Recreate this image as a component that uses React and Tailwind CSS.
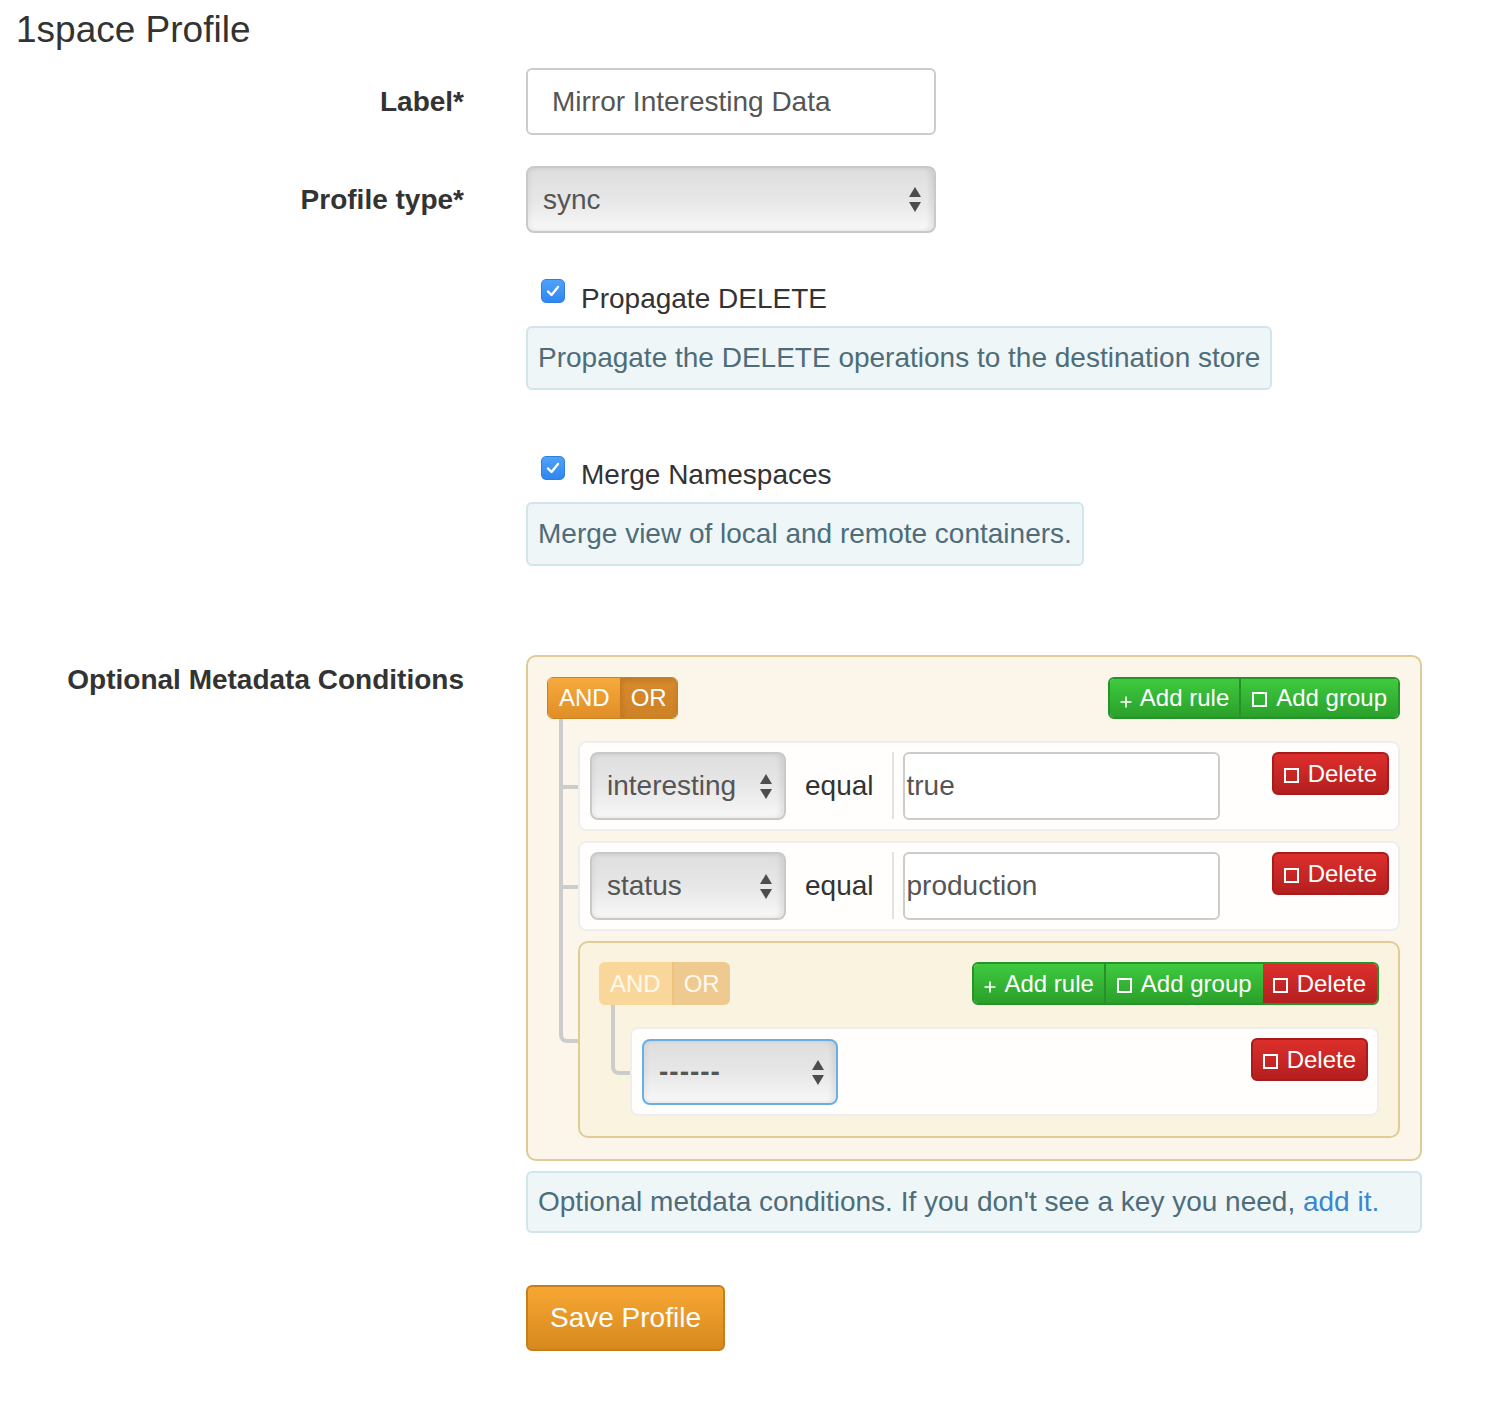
import React from "react";

function Arrows({ className = "" }) {
  return (
    <svg width="12" height="25" viewBox="0 0 12 25" className={className}>
      <path d="M0 10 L6 0 L12 10 Z" fill="#4d4d4d" />
      <path d="M0 15 L12 15 L6 25 Z" fill="#4d4d4d" />
    </svg>
  );
}

function Select({ label, className = "", focused = false, textClass = "" }) {
  return (
    <div
      className={
        "flex items-center justify-between rounded-[8px] border-2 bg-linear-to-b from-[#dedede] via-[#e7e7e7] to-[#f8f8f8] shadow-[inset_-4px_0_5px_rgba(0,0,0,0.07),inset_3px_0_4px_rgba(0,0,0,0.04)] text-[28px] text-[#555555] " +
        (focused ? "border-[#68afea] " : "border-[#c9c9c9] ") +
        className
      }
    >
      <span className={textClass}>{label}</span>
      <Arrows />
    </div>
  );
}

function Sq() {
  return <span className="inline-block w-[15px] h-[15px] border-2 border-white mr-[9px] mt-[3px]" />;
}

function Plus() {
  return (
    <svg width="12" height="12" viewBox="0 0 12 12" className="mr-[8px] mt-[7px]">
      <path d="M6 0.5v11M0.5 6h11" stroke="white" strokeWidth="1.7" />
    </svg>
  );
}

function DeleteBtn({ className = "" }) {
  return (
    <div
      className={
        "flex items-center h-[43px] px-[10px] rounded-[6px] border-2 border-[#a81c1c] bg-linear-to-b from-[#dc2f2c] to-[#b41f1f] text-white text-[24px] leading-none " +
        className
      }
    >
      <Sq />
      <span>Delete</span>
    </div>
  );
}

function AndOr({ faded = false }) {
  if (faded) {
    return (
      <div className="flex h-[43px] rounded-[6px] overflow-hidden text-[24px] text-[#fff8ec] leading-none">
        <div className="flex items-center px-[11px] bg-[#f9d79b]">AND</div>
        <div className="w-[2px] bg-[#f1c27a]" />
        <div className="flex items-center px-[10px] bg-[#efca90]">OR</div>
      </div>
    );
  }
  return (
    <div className="flex h-[42px] rounded-[6px] overflow-hidden border border-[#c98220] text-[24px] text-white leading-none">
      <div className="flex items-center pl-[11px] pr-[10px] bg-linear-to-b from-[#f6aa3c] to-[#e08e27]">AND</div>
      <div className="w-[2px] bg-[#c77d1f]" />
      <div className="flex items-center pl-[9px] pr-[10px] bg-linear-to-b from-[#d98b2d] to-[#cd8226] shadow-[inset_0_3px_5px_rgba(0,0,0,0.12)]">OR</div>
    </div>
  );
}

function GreenGroup({ withDelete = false }) {
  return (
    <div
      className={
        "flex rounded-[6px] overflow-hidden border-2 border-[#25922a] text-[24px] text-white leading-none " +
        (withDelete ? "h-[43px]" : "h-[42px]")
      }
    >
      <div className="flex items-center pl-[10px] pr-[10px] bg-linear-to-b from-[#3fca3f] to-[#2aa02a]">
        <Plus />
        <span>Add rule</span>
      </div>
      <div className="w-[2px] bg-[#27902a]" />
      <div className="flex items-center pl-[11px] pr-[11px] bg-linear-to-b from-[#3fca3f] to-[#2aa02a]">
        <Sq />
        <span>Add group</span>
      </div>
      {withDelete && (
        <div className="flex items-center pl-[10px] pr-[11px] bg-linear-to-b from-[#dc2f2c] to-[#b41f1f]">
          <Sq />
          <span>Delete</span>
        </div>
      )}
    </div>
  );
}

function Conn({ last = false }) {
  return (
    <>
      <span
        className={
          "absolute left-[-21px] top-[-24px] h-[calc(50%+27px)] w-[19px] border-l-4 border-b-4 border-[#cccccc] " +
          (last ? "rounded-bl-[8px]" : "")
        }
      />
      {!last && <span className="absolute left-[-21px] top-[50%] h-[calc(50%+14px)] w-[4px] bg-[#cccccc]" />}
    </>
  );
}

function Rule({ field, value }) {
  return (
    <li className="relative flex items-start rounded-[8px] border-2 border-[#eeeeee] bg-[#fffefc] pt-[9px] pb-[9px] pl-[10px] pr-[9px]">
      <Conn />
      <Select label={field} className="w-[196px] h-[68px] pl-[15px] pr-[12px]" />
      <span className="ml-[19px] self-center text-[28px] text-[#333333] leading-[40px]">equal</span>
      <span className="ml-[18px] w-[2px] h-[67px] bg-[#e2e2e2]" />
      <div className="ml-[9px] w-[317px] h-[68px] flex items-center rounded-[6px] border-2 border-[#cccccc] bg-white pl-[2px] text-[28px] text-[#555555]">
        {value}
      </div>
      <DeleteBtn className="ml-auto" />
    </li>
  );
}

function HelpBox({ children, className = "" }) {
  return (
    <div
      className={
        "rounded-[6px] border-2 border-[#d0e5ec] bg-[#eef6f8] px-[10px] text-[28px] leading-[40px] text-[#4f6c79] " +
        className
      }
    >
      {children}
    </div>
  );
}

function Check() {
  return (
    <span className="mt-[2px] ml-[15px] flex items-center justify-center w-[24px] h-[24px] rounded-[5px] border border-[#2f7fe0] bg-linear-to-b from-[#4ea2f9] to-[#2f86ef] shrink-0">
      <svg width="14" height="12" viewBox="0 0 14 12">
        <path d="M2 6.5 L5.5 10 L12 2" fill="none" stroke="white" strokeWidth="2.4" strokeLinecap="round" strokeLinejoin="round" />
      </svg>
    </span>
  );
}

export default function App() {
  return (
    <div className="font-['Liberation_Sans',Arial,sans-serif] text-[#333333] bg-white min-h-[1418px]">
      <h1 className="ml-[16px] pt-[10px] text-[37px] leading-[40px] font-normal">1space Profile</h1>

      <div className="mt-[18px] flex items-center">
        <label className="w-[464px] text-right font-bold text-[28px] leading-[40px]">Label*</label>
        <div className="ml-[62px] w-[410px] h-[67px] flex items-center rounded-[6px] border-2 border-[#cccccc] bg-white pl-[24px] text-[28px] text-[#555555]">
          Mirror Interesting Data
        </div>
      </div>

      <div className="mt-[31px] flex items-center">
        <label className="w-[464px] text-right font-bold text-[28px] leading-[40px]">Profile type*</label>
        <div className="ml-[62px]">
          <Select label="sync" className="w-[410px] h-[67px] pl-[15px] pr-[13px]" />
        </div>
      </div>

      <div className="mt-[44px] flex">
        <div className="w-[464px]" />
        <div className="ml-[62px] flex flex-col items-start">
          <div className="flex items-start">
            <Check />
            <span className="ml-[16px] mt-[2px] text-[28px] leading-[40px] text-[#333333]">Propagate DELETE</span>
          </div>
          <HelpBox className="mt-[7px] py-[10px] w-fit">
            Propagate the DELETE operations to the destination store
          </HelpBox>

          <div className="mt-[64px] flex items-start">
            <Check />
            <span className="ml-[16px] mt-[1px] text-[28px] leading-[40px] text-[#333333]">Merge Namespaces</span>
          </div>
          <HelpBox className="mt-[7px] py-[10px] w-fit">Merge view of local and remote containers.</HelpBox>
        </div>
      </div>

      <div className="mt-[89px] flex items-start">
        <label className="w-[464px] pt-[5px] text-right font-bold text-[28px] leading-[40px]">
          Optional Metadata Conditions
        </label>
        <div className="ml-[62px] w-[896px]">
          <div className="rounded-[10px] border-2 border-[#dfca98] bg-[#fcf6ea] pt-[20px] pl-[19px] pr-[20px] pb-[21px]">
            <div className="flex items-start justify-between">
              <AndOr />
              <GreenGroup />
            </div>
            <ul className="mt-[22px] ml-[31px] flex flex-col gap-[10px]">
              <Rule field="interesting" value="true" />
              <Rule field="status" value="production" />
              <li className="relative rounded-[10px] border-2 border-[#e1cc98] bg-[#faf3df] pt-[19px] pl-[19px] pr-[19px] pb-[20px]">
                <Conn last />
                <div className="flex items-start justify-between">
                  <AndOr faded />
                  <GreenGroup withDelete />
                </div>
                <ul className="mt-[22px] ml-[31px]">
                  <li className="relative flex items-start rounded-[8px] border-2 border-[#eeeeee] bg-[#fffefc] pt-[10px] pb-[9px] pl-[10px] pr-[9px]">
                    <Conn last />
                    <Select
                      label="------"
                      focused
                      className="w-[196px] h-[66px] pl-[15px] pr-[12px] shadow-[0_0_3px_rgba(102,175,233,0.5)]"
                      textClass="tracking-[1px] font-bold"
                    />
                    <DeleteBtn className="ml-auto -mt-[1px]" />
                  </li>
                </ul>
              </li>
            </ul>
          </div>

          <HelpBox className="mt-[10px] py-[9px] w-full">
            Optional metdata conditions. If you don't see a key you need,{" "}
            <span className="text-[#3a87cf]">add it.</span>
          </HelpBox>

          <button className="mt-[52px] w-[199px] h-[66px] rounded-[6px] border-2 border-[#c47e1c] bg-linear-to-b from-[#f6a733] to-[#d7891e] text-white text-[28px]">
            Save Profile
          </button>
        </div>
      </div>
    </div>
  );
}
